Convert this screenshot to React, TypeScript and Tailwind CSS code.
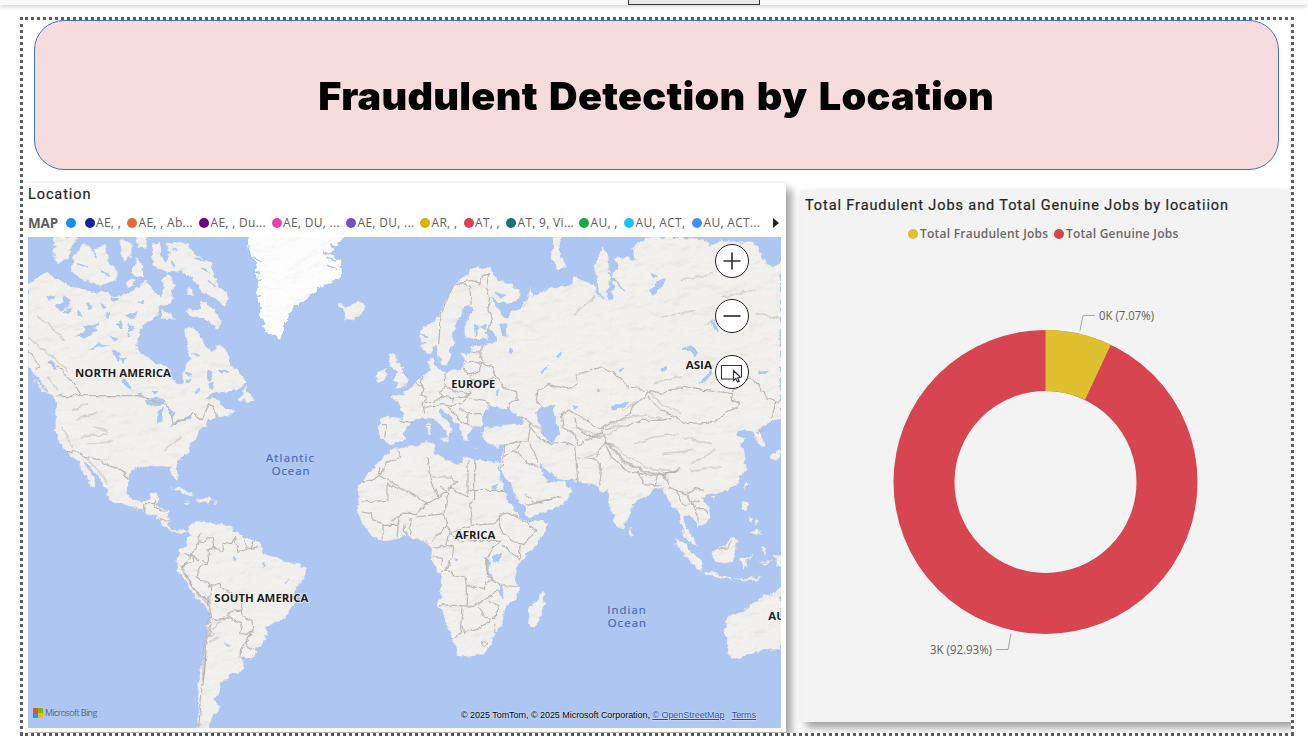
import React from 'react';

const legend: [string, string, string][] = [
  ['#118dff', '', 'w-[18.5px]'],
  ['#12239e', 'AE, ,', 'w-[42.5px]'],
  ['#e66c37', 'AE, , Ab...', 'w-[72px]'],
  ['#6b007b', 'AE, , Du...', 'w-[72.5px]'],
  ['#e044a7', 'AE, DU, ...', 'w-[74.5px]'],
  ['#744ec2', 'AE, DU, ...', 'w-[74px]'],
  ['#d9b300', 'AR, ,', 'w-[43.5px]'],
  ['#d64550', 'AT, ,', 'w-[42.5px]'],
  ['#197278', 'AT, 9, Vi...', 'w-[73px]'],
  ['#1aab40', 'AU, ,', 'w-[45px]'],
  ['#15c6f4', 'AU, ACT,', 'w-[68px]'],
  ['#4092ff', 'AU, ACT...', 'w-[74px]'],
];

const land: string[] = [
  // North America
  '0,140 20,125 50,108 75,118 100,130 130,150 150,148 165,160 200,165 235,170 260,180 290,170 310,165 335,150 355,130 365,150 385,175 400,180 405,160 400,130 420,112 438,130 436,180 425,200 400,205 385,235 365,255 345,265 335,285 328,310 330,335 345,355 380,375 410,385 435,400 435,425 448,445 462,440 465,415 475,395 490,365 478,345 475,315 470,290 475,272 500,275 515,290 530,320 545,345 560,340 575,325 590,330 605,360 610,380 630,400 650,425 655,440 630,455 590,465 560,465 545,475 530,490 555,485 575,490 585,510 600,520 618,515 615,528 590,540 570,545 565,540 545,550 530,570 510,585 500,605 485,615 488,640 460,665 445,680 450,715 448,733 435,715 425,690 405,688 375,688 350,690 325,690 305,705 300,735 300,770 315,790 345,792 360,785 368,770 393,768 388,785 385,800 400,815 425,820 422,850 420,865 430,875 450,880 465,872 482,885 460,887 440,884 420,874 400,860 395,847 370,834 340,820 310,808 275,800 240,785 238,760 225,740 205,715 185,690 165,668 175,690 195,720 205,750 190,745 175,720 160,700 150,672 135,660 115,640 95,610 80,580 80,540 85,500 80,480 60,465 45,445 30,420 15,400 0,390',
  // Arctic archipelago
  '80,0 150,0 130,30 120,60 95,82 75,60 85,30',
  '140,50 170,20 200,40 230,20 240,70 270,105 265,130 230,145 190,135 150,125 130,90',
  '275,10 310,10 310,60 290,75 280,50',
  '325,0 360,0 355,35 330,30',
  '320,60 345,80 345,120 315,115',
  '295,135 315,125 318,145 300,150',
  '375,20 395,10 400,50 410,80 425,50 415,20 440,12 480,20 500,50 555,90 560,130 605,185 590,210 560,185 520,165 500,130 460,105 420,105 385,95 370,65',
  '400,215 430,235 445,248 420,245 400,245',
  '475,220 515,215 520,190 560,215 578,255 570,275 540,250 490,235',
  '480,155 495,155 498,170 482,175',
  '635,485 655,450 665,475 680,490 660,495',
  '20,430 35,440 60,470 45,465',
  // Caribbean
  '425,755 455,752 480,762 500,774 485,778 455,764',
  '510,784 540,782 550,793 530,797 512,796',
  '470,794 485,795 475,799',
  '560,794 572,795 562,798',
  // South America
  '478,869 495,859 520,851 545,859 580,862 610,869 620,884 645,899 680,907 695,924 705,949 730,961 765,969 800,979 828,991 833,1014 820,1039 800,1064 795,1099 785,1129 745,1154 718,1169 715,1194 695,1224 680,1259 660,1266 640,1259 648,1284 640,1304 605,1311 600,1329 580,1332 578,1349 570,1369 558,1384 575,1407 570,1424 550,1444 545,1473 510,1473 508,1439 515,1409 508,1369 512,1339 520,1289 530,1239 535,1179 545,1149 540,1114 520,1094 495,1074 480,1044 460,1014 445,999 447,974 455,944 475,924 485,894 478,874',
  // Iceland, Britain, Ireland
  '930,200 940,195 950,215 975,200 1000,193 1010,210 1015,218 1000,235 975,250 950,245 945,225',
  '1085,345 1103,350 1110,375 1125,400 1140,425 1135,445 1095,455 1110,437 1095,430 1110,405 1090,390 1080,370',
  '1050,405 1075,393 1078,410 1070,430 1050,438 1045,425',
  // Eurasia
  '1053,545 1100,540 1125,547 1115,510 1110,490 1085,485 1095,478 1125,475 1130,462 1150,455 1165,435 1185,418 1205,400 1198,375 1208,358 1218,375 1225,400 1245,402 1290,400 1305,395 1310,365 1305,355 1330,345 1330,330 1370,325 1395,315 1370,303 1340,310 1310,300 1310,270 1325,240 1340,215 1325,200 1310,210 1300,235 1280,265 1275,290 1280,310 1265,330 1270,355 1255,383 1240,380 1230,350 1225,325 1200,345 1180,340 1178,300 1175,280 1200,262 1230,240 1245,215 1260,180 1275,150 1300,125 1325,105 1350,90 1385,92 1390,110 1415,130 1450,140 1470,160 1472,185 1455,200 1420,195 1390,180 1410,215 1420,235 1440,240 1460,220 1480,205 1500,190 1505,150 1515,180 1540,165 1570,150 1600,150 1635,140 1640,120 1665,130 1700,145 1710,175 1730,190 1710,150 1700,110 1708,60 1725,35 1740,55 1745,110 1745,150 1735,185 1755,185 1758,150 1750,110 1770,95 1758,60 1790,65 1800,60 1825,70 1810,30 1840,15 1870,0 1950,0 2020,10 2050,25 2080,12 2120,18 2160,15 2190,25 2200,60 2230,95 2259,70 2259,548 2235,550 2215,565 2190,580 2200,600 2215,630 2198,632 2185,605 2165,582 2140,580 2120,597 2152,600 2135,620 2150,650 2155,690 2130,735 2096,759 2056,769 2035,772 2018,784 2041,814 2050,840 2026,862 2010,872 2001,854 1981,830 1966,838 1970,872 1996,895 2006,935 1988,918 1963,884 1956,838 1946,814 1930,812 1921,790 1906,754 1886,754 1846,784 1811,805 1801,840 1786,880 1771,872 1756,838 1746,800 1741,760 1726,768 1706,744 1686,737 1650,735 1590,722 1565,702 1535,680 1540,712 1560,735 1595,735 1608,728 1631,765 1606,800 1560,820 1500,842 1490,815 1460,770 1445,740 1420,698 1415,675 1425,645 1430,622 1400,625 1365,612 1355,590 1370,573 1420,565 1460,560 1490,562 1480,540 1450,525 1445,508 1415,518 1395,505 1380,508 1368,535 1362,562 1335,572 1322,590 1324,612 1307,608 1300,580 1280,550 1252,525 1240,513 1235,530 1265,565 1275,580 1262,592 1257,602 1250,580 1215,545 1190,542 1155,550 1135,570 1130,600 1100,622 1085,625 1065,612 1053,610',
  '1200,560 1207,560 1205,590 1200,592', '1235,605 1262,602 1257,616', '1332,632 1350,634 1345,638', '1396,628 1410,622 1405,636',
  '1575,0 1605,0 1590,30 1600,60 1612,92 1595,98 1570,70 1575,30',
  // Africa
  '1070,650 1100,632 1140,632 1200,613 1220,618 1220,650 1250,665 1295,682 1305,660 1340,668 1390,672 1415,675 1415,705 1420,729 1430,770 1450,810 1475,842 1495,858 1560,852 1555,880 1510,940 1470,980 1460,1010 1470,1050 1465,1090 1430,1115 1422,1140 1425,1165 1400,1185 1390,1225 1360,1252 1300,1263 1285,1245 1270,1198 1250,1140 1230,1100 1240,1060 1238,1010 1210,970 1212,935 1202,915 1170,908 1140,898 1070,914 1030,893 1000,855 985,825 995,790 988,760 995,750 1020,705 1050,680',
  '1545,1059 1552,1079 1540,1129 1525,1169 1505,1174 1498,1149 1505,1109 1535,1084',
  // South-east Asia, Japan, Australia
  '1804,875 1815,885 1812,898 1802,892',
  '1936,907 1961,914 1996,949 2026,979 2021,1001 1996,987 1966,949',
  '2026,1007 2066,1009 2106,1020 2111,1027 2066,1021 2031,1015',
  '2120,1024 2150,1026 2200,1020 2190,1030 2140,1032',
  '2051,941 2086,934 2106,899 2131,909 2121,939 2116,974 2086,979 2056,969',
  '2136,964 2161,957 2176,952 2154,968 2158,989 2144,994 2140,975',
  '2144,792 2160,795 2160,822 2146,818', '2165,880 2195,872 2200,892 2180,900', '2155,836 2175,845 2168,862', '2180,845 2192,855 2186,868',
  '2151,734 2160,740 2149,758', '2048,780 2064,780 2060,792',
  '2200,930 2214,937 2208,955', '2190,973 2230,974 2210,983',
  '2236,955 2259,955 2259,988 2246,980',
  '2259,640 2240,645 2228,662 2240,670 2259,660',
  '2259,1054 2231,1074 2206,1074 2196,1089 2166,1104 2146,1124 2096,1139 2088,1169 2096,1209 2106,1264 2126,1267 2166,1254 2206,1237 2259,1237',
];

const lakes: string[] = [
  '350,492 385,480 412,492 400,502 360,505', '392,522 403,513 402,550 390,562 386,545', '410,505 440,525 436,548 425,520',
  '424,566 460,548 455,556', '462,546 490,538 488,545', '85,205 110,190 105,175 130,190 115,215 95,220', '145,298 175,280 210,275 170,300',
  '165,265 190,270 215,255 205,270 175,280', '188,335 215,320 245,325 215,328', '255,335 272,345 275,375 262,360', '282,425 295,430 312,460 300,455 288,440',
  '275,365 295,360 285,378', '60,175 75,180 65,190', '175,195 190,210 185,218', '245,300 270,305 262,312', '290,235 305,225 325,240 305,248', '265,260 280,250 278,275',
  '300,265 320,270 305,280', '330,470 345,468 338,478', '375,462 388,465 380,472', '540,400 555,405 545,435 538,420', '572,400 600,405 580,412',
  '475,405 492,412 478,418', '470,430 490,428 480,434', '503,465 512,450 508,470', '545,440 556,435 550,455', '490,350 520,352 505,360',
  '220,200 235,210 225,216', '250,180 270,190 255,195', '330,195 350,190 345,200', '60,375 70,370 85,395 75,390', '150,220 165,235 150,235',
  '1540,515 1578,505 1575,530 1585,560 1592,590 1580,612 1560,615 1545,590 1530,550 1523,525',
  '1415,262 1435,260 1437,300 1425,298', '1377,275 1398,290 1403,312 1382,312', '1398,165 1430,175 1420,183', '1340,262 1350,268 1342,300', '1355,270 1375,265 1370,280', '1445,335 1458,345 1448,348', '1405,465 1412,460 1408,475',
  '2010,440 2030,425 2045,405 2055,385 2052,408 2030,435', '1750,510 1775,500 1800,500 1780,510 1755,520', '1865,160 1885,135 1912,125 1900,150 1875,175', '1870,110 1888,120 1875,125',
  '1965,340 1990,325 2010,345 2000,360 1985,340', '1635,510 1650,508 1640,518', '1540,405 1560,385 1545,410', '1585,360 1600,345 1595,362', '2050,255 2062,265 2070,285 2055,275', '2190,405 2218,400 2205,410', '1900,395 1915,385 1910,402', '1770,400 1790,393 1780,405', '1708,455 1715,458 1710,465',
  '1395,955 1420,952 1415,975 1400,975', '1375,965 1384,975 1380,1000 1390,1025 1378,1010', '1418,1040 1424,1060 1425,1085 1418,1070', '1390,752 1410,745 1400,760', '615,960 628,965 620,970', '708,975 714,990 708,995', '770,1038 782,1030 775,1040', '590,1222 605,1225 598,1228', '540,1080 548,1092 543,1092', '1282,965 1290,968 1284,972',
  '105,225 130,215 120,230', '230,235 245,225 240,245', '310,228 330,225 325,235', '295,290 305,285 300,300',
];

const borders: string[] = [
  // Americas
  'M88,476H330L350,482 375,490 405,498 425,515 435,560 460,552 495,530 520,545 545,500 558,510 566,542',
  'M160,476L140,440 110,410 85,385M0,340L20,365 32,390 22,398', 'M115,643L150,645 175,662 215,668 240,685 260,692 280,695 300,728',
  'M350,825V800H380V785M380,800L384,815 400,822 420,822M395,845L420,850',
  'M520,888L510,905 520,918 555,898 560,930 540,940 545,965 540,980 515,972 490,955 470,950',
  'M560,930L575,945 590,935 585,915 610,920 620,900M620,905L630,940 650,938 690,930M650,905L655,935M675,908L670,932',
  'M490,955L495,970 475,985 460,990M540,980L515,990 505,1015 515,1030 540,1035 548,1055 545,1090 540,1105',
  'M540,1050L575,1035 580,1055 610,1070 640,1090 642,1120 620,1120 600,1128 600,1145 570,1150 552,1145 545,1115M600,1145L640,1160 635,1190 660,1192 675,1180 672,1150 642,1140 640,1120M675,1180L650,1220 640,1240 640,1258M650,1220L680,1240',
  'M552,1150L545,1180 535,1230 530,1300 522,1360 518,1410 512,1470M520,905L495,945 475,975 460,1000M470,1010L500,1060 540,1090 548,1120',
  // Europe
  'M1232,325L1235,280 1235,240 1255,200 1265,160 1300,135 1325,150 1330,200M1300,135L1330,130 1355,140 1365,115 1382,112M1382,112L1375,150 1385,180 1380,220 1392,255 1375,290',
  'M1060,560L1075,560 1070,605M1115,550L1155,558M1165,435L1185,455 1180,470 1195,480 1185,500 1190,530',
  'M1185,418L1180,440 1185,455M1250,405L1255,450 1235,462 1240,480 1215,495 1190,500M1255,450L1290,465 1325,470 1330,445 1325,410 1305,395',
  'M1240,480L1270,485 1310,480 1325,470M1190,510L1215,510 1240,500 1270,505 1280,485M1325,410L1355,400 1360,380 1330,370 1310,372M1360,380L1390,385 1405,420 1390,430 1330,430M1405,420L1430,455 1465,460 1468,490 1440,505',
  'M1330,345L1355,348 1365,325M1355,348L1365,380M1310,480L1370,490 1385,510M1320,530L1365,530M1260,510L1290,540 1300,560 1320,560M1270,505L1300,500 1315,485M1290,515L1305,520 1320,530 1318,560 1330,570',
  'M1218,380L1225,382M1480,540L1510,560 1500,610 1430,622M1430,622L1428,660 1420,695M1500,610L1520,650 1530,680M1428,660L1460,640 1475,620M1460,640L1500,680 1530,690',
  // Asia
  'M1545,515L1525,490 1530,460 1560,443 1620,455 1650,440 1645,415 1710,390 1755,405 1780,425 1800,450 1840,455 1850,465',
  'M1605,570L1600,530 1620,520 1660,540 1690,560 1720,575 1740,560 1780,545 1800,535 1815,510 1850,480 1870,460 1900,470 1955,450 2030,460 2080,465 2115,470 2110,490 2140,500 2100,525 2075,540 2060,555 1980,560 1900,520 1860,480',
  'M1640,545L1650,575 1690,600 1720,590M1600,570L1640,590 1650,625 1700,600 1735,600M1560,620L1610,615 1640,630 1650,735M1650,660L1700,665 1730,620 1760,625M1700,665L1720,700 1715,745M1735,625L1750,660 1800,700 1860,715 1910,712 1950,700',
  'M1735,620L1720,580 1750,570 1800,570 1840,550 1900,550 1930,545M2115,465L2150,425 2180,430 2200,460 2215,480 2240,495 2259,490M2240,495L2230,540M2185,590L2205,580',
  'M1830,712L1850,740 1900,745M1890,710L1880,750M1910,712L1920,750 1945,760 1960,790 1970,810M1945,760L1975,770 1985,790 2015,795M1975,770L2000,755 2025,760M1985,790L2010,815 2030,815 2040,830M1970,810L1990,800 2010,830 2010,855M2070,940L2100,930 2110,910',
  'M1500,560L1530,600 1560,620M1490,770L1520,800 1560,790 1600,780M1490,800L1500,805 1580,780',
  // Africa
  'M1110,635L1118,660 1080,675 1055,715 1000,740M1055,690V715L1150,770 1195,800 1230,780 1210,730 1200,660M1000,795L1080,790V740L1110,755M1080,730L1150,770M1195,800L1165,830 1125,828 1090,855M1230,780L1290,735 1270,720 1210,720M1240,750L1260,770 1248,830 1165,840M1260,750L1320,780V670M1340,670V760H1430M1340,760V790L1325,800 1330,860M1340,760L1320,755',
  'M1000,825L1030,830 1035,850 1065,860 1065,905M1065,865L1110,865 1115,830M1110,865L1108,900M1130,860L1135,895M1150,840L1145,895M1248,830L1258,860 1235,890 1210,910M1258,860L1265,890 1255,925 1215,935M1265,890L1330,865 1400,860 1420,830 1410,850M1265,890L1300,915 1340,910 1420,910',
  'M1420,830L1440,825 1475,845M1410,850L1425,890 1460,915 1490,920 1530,880 1480,850M1475,925L1475,965 1425,925M1420,910L1395,930 1380,960 1375,990 1380,1020 1400,1030',
  'M1255,925L1280,930 1275,960 1250,1000M1215,960L1240,960 1240,985M1240,1003H1270L1280,1020 1310,1015 1315,1045 1370,1055 1370,1035 1395,1025M1315,1045V1105M1235,1103L1340,1108 1380,1080 1400,1065 1420,1060M1400,1030L1420,1045 1470,1050',
  'M1305,1108L1300,1190 1270,1205M1305,1165L1310,1190 1350,1175 1390,1148M1350,1110L1370,1140 1400,1145 1410,1110 1385,1090M1360,1215L1372,1210 1378,1220 1368,1228ZM1400,1160L1400,1190',
];

const ridges = [
  'M1750,560L1790,545 1830,535 1880,540 1930,550M1700,600L1740,590 1780,570M1745,625L1790,675 1850,705 1910,710 1960,695M1755,620L1800,660 1870,695 1930,700M1820,620L1880,600 1950,590M1670,660L1720,640M1860,460L1900,500 1960,530M1780,520L1840,490M1500,555L1530,570 1545,585M1640,570L1700,590',
  'M100,575L120,600 130,630M130,520L180,500M150,545L200,530M160,600L240,590M170,660L210,700 240,740M200,570L240,580M180,620L250,615M410,640L460,600M30,240L60,260 110,310M0,300L60,350 120,400M60,420L90,460M550,1180L580,1150M545,1220L570,1200M535,1200L555,1190',
  'M1900,650L2000,640M1960,600L2050,620M1990,680L2060,640M2030,260L2140,230M1900,240L2000,220M2180,230L2259,245M1640,230L1700,180M1960,130L2050,110M2080,180L2180,160M1990,700L2080,690M1880,440L1960,420',
];

function WorldMap() {
  return (
    <svg className="block h-[491px] w-[753px]" viewBox="0 0 2259 1473" fill="none">
      <defs>
        <filter id="relief" x="0" y="0" width="2259" height="1473" filterUnits="userSpaceOnUse" colorInterpolationFilters="sRGB">
          <feTurbulence type="fractalNoise" baseFrequency="0.045" numOctaves="3" seed="4" result="coast" />
          <feDisplacementMap in="SourceGraphic" in2="coast" scale="22" xChannelSelector="R" yChannelSelector="G" result="shape" />
          <feTurbulence type="fractalNoise" baseFrequency="0.016 0.026" numOctaves="4" seed="9" result="hills" />
          <feDiffuseLighting in="hills" surfaceScale="9" diffuseConstant="1.15" lightingColor="#ffffff" result="light">
            <feDistantLight azimuth="235" elevation="62" />
          </feDiffuseLighting>
          <feComposite in="shape" in2="light" operator="arithmetic" k1="0.1" k2="0.9" result="lit" />
          <feComposite in="lit" in2="shape" operator="in" />
        </filter>
        <filter id="wobble" x="0" y="0" width="2259" height="1473" filterUnits="userSpaceOnUse">
          <feTurbulence type="fractalNoise" baseFrequency="0.045" numOctaves="2" seed="4" />
          <feDisplacementMap in="SourceGraphic" scale="16" xChannelSelector="R" yChannelSelector="G" />
        </filter>
      </defs>
      <rect width="2259" height="1473" fill="#adc7f2" />
      <g filter="url(#relief)">
        {land.map((p, i) => <polygon key={i} points={p} fill="#f1f0ed" stroke="#e2e3e2" strokeWidth="2" />)}
        <polygon fill="#fdfdfd" points="660,-10 665,40 680,80 690,130 685,180 700,220 705,260 720,290 750,298 755,310 765,295 765,260 785,240 795,210 830,190 870,155 920,130 940,110 935,70 910,50 930,20 955,-10" />
      </g>
      <g filter="url(#wobble)">
        {lakes.map((p, i) => <polygon key={i} points={p} fill="#adc7f2" stroke="#adc7f2" strokeWidth="3" />)}
        <path d="M670,60L700,75M670,95L695,110M680,135L705,125M680,180L700,175M905,20L930,35M895,60L925,70M900,85L930,98M885,45L915,55M500,60L530,75M520,90L545,105M430,30L450,40M540,130L560,150M430,70L440,90M1178,290L1200,298M1180,315L1198,318M1740,110L1760,130 1790,165M190,30L205,60M215,100L245,115M150,80L180,90" stroke="#adc7f2" strokeWidth="5" />
        <g stroke="#bdb8b4" strokeWidth="3.6" strokeLinejoin="round">
          {borders.map((d, i) => <path key={i} d={d} />)}
        </g>
        <g stroke="#bdbbb7" strokeWidth="5" strokeLinecap="round" opacity=".5">
          {ridges.map((d, i) => <path key={i} d={d} />)}
        </g>
        <path d="M1745,625L1790,675 1850,705 1910,710 1960,695M475,975L465,1000 500,1060 540,1098M545,1130L532,1220 525,1330" stroke="#aaa7a3" strokeWidth="8" opacity=".45" />
      </g>
      <g fontFamily="'Open Sans','Noto Sans',sans-serif" fontSize="34" fontWeight="700" fill="#1c1c1c" stroke="#ffffff" strokeOpacity=".7" strokeWidth="5" paintOrder="stroke">
        <text x="141" y="419" textLength="288" lengthAdjust="spacingAndGlyphs">NORTH AMERICA</text>
        <text x="1270" y="454" textLength="132" lengthAdjust="spacingAndGlyphs">EUROPE</text>
        <text x="1973" y="395" textLength="79" lengthAdjust="spacingAndGlyphs">ASIA</text>
        <text x="1281" y="906" textLength="121" lengthAdjust="spacingAndGlyphs">AFRICA</text>
        <text x="559" y="1096" textLength="282" lengthAdjust="spacingAndGlyphs">SOUTH AMERICA</text>
        <text x="2221" y="1149">AU</text>
      </g>
      <g fontFamily="'Open Sans','Noto Sans',sans-serif" fontSize="34" fill="#4a68ae" stroke="#4a68ae" strokeWidth=".5">
        <text x="714" y="674" textLength="144">Atlantic</text>
        <text x="731" y="713" textLength="113">Ocean</text>
        <text x="1738" y="1131" textLength="115">Indian</text>
        <text x="1739" y="1170" textLength="115">Ocean</text>
      </g>
    </svg>
  );
}

function MapButton({ children }: { children: React.ReactNode }) {
  return (
    <button className="flex size-[34px] items-center justify-center rounded-full border-[1.5px] border-[#222] bg-white">
      <svg className="size-[30px] shrink-0" viewBox="0 0 30 30" fill="none" stroke="#333" strokeWidth="1.7">{children}</svg>
    </button>
  );
}

function MapCard() {
  return (
    <section className="relative mt-[13px] flex h-[549px] w-[763px] shrink-0 flex-col bg-white pl-[5px] shadow-[6px_6px_8px_0px_rgba(0,0,0,0.34),0_-1px_3px_rgba(0,0,0,0.06)]">
      <h2 className="h-[27px] whitespace-nowrap pt-[3px] font-['Roboto',sans-serif] text-[14.5px] leading-[18px] tracking-[0.9px] text-[#252423] [-webkit-text-stroke:0.2px_#252423]">Location</h2>
      <div className="flex h-[27px] items-center whitespace-nowrap pb-px font-['Open_Sans','Noto_Sans',sans-serif] text-[12px] text-[#605e5c]">
        <span className="w-[38px] text-[13.5px] font-bold tracking-[-0.2px]">MAP</span>
        {legend.map(([color, label, width], i) => (
          <span key={i} className={`flex shrink-0 items-center gap-[1.5px] ${width}`}>
            <svg className="size-[10px] shrink-0"><circle cx="5" cy="5" r="5" fill={color} /></svg>
            <span className="tracking-[0.3px]">{label}</span>
          </span>
        ))}
        <svg className="ml-[7px] h-[10px] w-[6px] shrink-0"><path d="M0 0L6 5 0 10Z" fill="#222" /></svg>
      </div>
      <div className="relative h-[491px] w-[753px] overflow-hidden">
        <WorldMap />
        <div className="absolute left-[687px] top-[6.5px] flex flex-col gap-[21.5px]">
          <MapButton><path d="M6.500 15h17M15 6.500v17" /></MapButton>
          <MapButton><path d="M6.500 15h17" /></MapButton>
          <MapButton>
            <path d="M17 22H4.500V8.500h20V20" strokeWidth="1.100" />
            <path d="M16.500 13.500v10l2.300-2 1.700 3.500 1.700-.8-1.600-3.500 3-.2z" fill="#fff" strokeWidth="1.200" />
          </MapButton>
        </div>
        <div className="absolute left-[5px] top-[470px] flex items-center gap-[2px] font-['Open_Sans',sans-serif] text-[9px] leading-[12px] tracking-[-0.63px] text-[#5f6878]">
          <span className="grid size-[10px] grid-cols-2"><i className="bg-[#f25022]" /><i className="bg-[#7fba00]" /><i className="bg-[#00a4ef]" /><i className="bg-[#ffb900]" /></span>
          <span>Microsoft Bing</span>
        </div>
        <div className="absolute right-[25px] top-[472px] flex w-[295px] justify-between whitespace-nowrap font-['Liberation_Sans',Arial,sans-serif] text-[9px] leading-[13px] tracking-[-0.04px] text-black [text-shadow:0_0_2px_#fff]">
          <span>© 2025 TomTom, © 2025 Microsoft Corporation, <a className="text-[#2b4da0] underline">© OpenStreetMap</a></span>
          <a className="text-[#2b4da0] underline">Terms</a>
        </div>
      </div>
    </section>
  );
}

function DonutCard() {
  return (
    <section className="ml-[14px] mt-[21px] flex h-[531px] w-[491px] shrink-0 flex-col bg-[#f3f3f3] shadow-[6px_6px_8px_0px_rgba(0,0,0,0.36),0_-1px_4px_rgba(0,0,0,0.06)]">
      <h2 className="whitespace-nowrap pl-[5px] pt-[6px] font-['Roboto',sans-serif] text-[14.5px] leading-[18px] tracking-[0.9px] text-[#252423] [-webkit-text-stroke:0.2px_#252423]">Total Fraudulent Jobs and Total Genuine Jobs by locatiion</h2>
      <div className="mt-[10px] flex items-center gap-[6px] pl-[108px] font-['Open_Sans',sans-serif] text-[12px] font-semibold leading-[18px] text-[#6a6866]">
        <span className="flex w-[140px] items-center gap-[2px] whitespace-nowrap"><i className="size-[10px] shrink-0 rounded-full bg-[#dfc02f]" /><span className="tracking-[0.23px]">Total Fraudulent Jobs</span></span>
        <span className="flex items-center gap-[2px] whitespace-nowrap"><i className="size-[10px] shrink-0 rounded-full bg-[#d64550]" /><span className="tracking-[0.23px]">Total Genuine Jobs</span></span>
      </div>
      <svg className="mt-[47px] h-[380px] w-[491px]" viewBox="800 290 491 380" fill="none">
        <circle cx="1045.500" cy="482" r="121.500" stroke="#d64550" strokeWidth="61" />
        <path d="M1045.500 330A152 152 0 0 1 1110.800 344.700L1085 399.700A91 91 0 0 0 1045.500 391Z" fill="#dfc02f" />
        <path d="M1080 330.500L1083 315.500H1095M1011 634L1008 649.500H996" stroke="#a6a6a6" />
        <g fontFamily="'Open Sans','Noto Sans',sans-serif" fontSize="12" fill="#605e5c">
          <text x="1099" y="320" textLength="55" lengthAdjust="spacingAndGlyphs">0K (7.07%)</text>
          <text x="930" y="654" textLength="62" lengthAdjust="spacingAndGlyphs">3K (92.93%)</text>
        </g>
      </svg>
    </section>
  );
}

const dotsX = 'flex h-[3px] bg-[repeating-linear-gradient(90deg,transparent_0_5px,#5c5c5c_5px_8px,transparent_8px_11px)]';

function DotRow() {
  return (
    <div className="flex h-[3px] shrink-0">
      <div className="w-[3px] bg-[#5c5c5c]" />
      <div className="w-[2px]" />
      <div className="flex-1 bg-[repeating-linear-gradient(90deg,#5c5c5c_0_3px,transparent_3px_6px)]" />
    </div>
  );
}

function DotColumn() {
  return <div className="mt-px w-[3px] shrink-0 bg-[repeating-linear-gradient(180deg,transparent_0_3px,#5c5c5c_3px_6px)]" />;
}

export default function App() {
  return (
    <div className="flex h-[753px] w-[1308px] flex-col overflow-hidden bg-white">
      <header className="flex h-[5px] shrink-0 bg-[#fafafa] pl-[628px] shadow-[0_1px_5px_rgba(0,0,0,0.22)]">
        <div className="h-[5px] w-[132px] border border-t-0 border-[#333] bg-[#e8e8e8]" />
      </header>
      <main className="ml-[20px] mt-[12px] flex h-[719px] w-[1274px] flex-col">
        <DotRow />
        <div className="flex h-[713px]">
          <DotColumn />
          <div className="flex w-[1268px] flex-col overflow-hidden">
            <div className="ml-[11px] flex h-[150px] w-[1245px] shrink-0 items-center justify-center rounded-[30px] border border-[#3f74b8] bg-[#f7dcde]">
              <h1 className="scale-x-[1.03] whitespace-nowrap pt-[2px] font-['Inter',sans-serif] text-[38.5px] font-black leading-[48px] tracking-[0.25px] [word-spacing:3px] text-black">Fraudulent Detection by Location</h1>
            </div>
            <div className="flex">
              <MapCard />
              <DonutCard />
            </div>
          </div>
          <DotColumn />
        </div>
        <DotRow />
      </main>
    </div>
  );
}
